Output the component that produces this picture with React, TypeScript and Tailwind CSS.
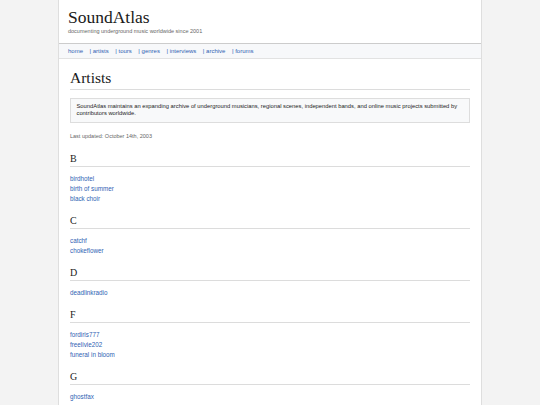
import React from 'react';

const navItems = ['artists', 'tours', 'genres', 'interviews', 'archive', 'forums'];

const sections: Array<{ letter: string; artists: string[] }> = [
  { letter: 'B', artists: ['birdhotel', 'birth of summer', 'black choir'] },
  { letter: 'C', artists: ['catchf', 'chokeflower'] },
  { letter: 'D', artists: ['deadlinkradio'] },
  { letter: 'F', artists: ['fordiris777', 'freelivie202', 'funeral in bloom'] },
  { letter: 'G', artists: ['ghostfax'] },
];

const serif = { fontFamily: '"Liberation Serif", "Times New Roman", serif' };

function LetterSection({ letter, artists }: { letter: string; artists: string[] }) {
  return (
    <section className="mt-[10.5px] first:mt-0">
      <h2
        className="text-[10px] leading-[12px] pb-[1px] border-b border-[#dcdcdc] text-[#222]"
        style={serif}
      >
        {letter}
      </h2>
      <ul className="mt-[7px]">
        {artists.map((name) => (
          <li key={name} className="text-[6.3px] leading-[10.3px]">
            <a href="#" className="text-[#2f5fb3]">
              {name}
            </a>
          </li>
        ))}
      </ul>
    </section>
  );
}

export default function App() {
  return (
    <div
      className="min-h-screen bg-[#f3f3f3]"
      style={{ fontFamily: '"Liberation Sans", Arial, sans-serif' }}
    >
      <div className="mx-auto w-[424px] min-h-screen bg-white border-x border-[#dedede]">
        <header className="px-[9px] pt-[7px] pb-[8px]">
          <div className="text-[17.5px] leading-[20px] text-[#1a1a1a]" style={serif}>
            SoundAtlas
          </div>
          <div className="mt-[1px] text-[5.5px] leading-[7px] text-[#666]">
            documenting underground music worldwide since 2001
          </div>
        </header>

        <nav className="flex items-center h-[16px] px-[9px] bg-[#f7f8fa] border-t border-[#cccccc] border-b border-b-[#e2e2e2] text-[6px]">
          <a href="#" className="text-[#2f5fb3]">home</a>
          {navItems.map((item) => (
            <a key={item} href="#" className="ml-[6.5px] text-[#2f5fb3]">
              | {item}
            </a>
          ))}
        </nav>

        <main className="px-[11px] pt-[9.5px] pb-[20px]">
          <h1
            className="text-[15.5px] leading-[18px] pb-[2px] border-b border-[#dcdcdc] text-[#1a1a1a]"
            style={serif}
          >
            Artists
          </h1>

          <div className="mt-[8px] border border-[#dddddd] bg-[#f8f9fa] px-[5.5px] py-[4.5px] text-[5.8px] leading-[7px] text-[#222]">
            SoundAtlas maintains an expanding archive of underground musicians, regional scenes,
            independent bands, and online music projects submitted by contributors worldwide.
          </div>

          <p className="mt-[10px] text-[5.5px] leading-[7px] text-[#666]">
            Last updated: October 14th, 2003
          </p>

          <div className="mt-[13px]">
            {sections.map((s) => (
              <LetterSection key={s.letter} letter={s.letter} artists={s.artists} />
            ))}
          </div>
        </main>
      </div>
    </div>
  );
}
